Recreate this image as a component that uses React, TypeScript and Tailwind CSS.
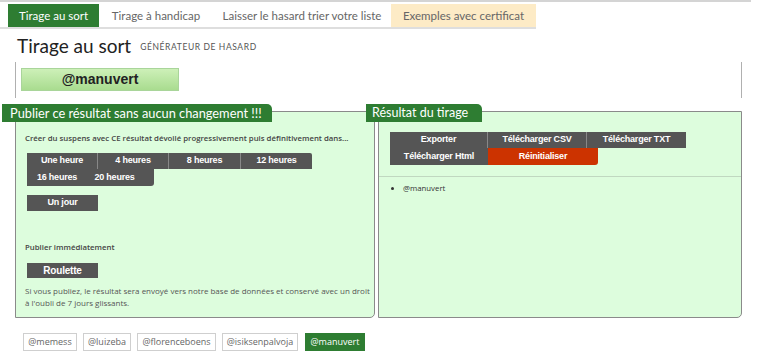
import React from "react";

const btn = "h-full flex items-center justify-center text-white text-[9px] font-bold tracking-[-0.2px] [font-family:'Liberation_Sans',Arial,sans-serif]";

export default function App() {
  return (
    <div className="w-[768px] h-[356px] bg-white overflow-hidden text-[#333] [font-family:Lato,'Open_Sans',sans-serif]">
      <div className="w-[751px] h-[2px] bg-[#d4d4d4]" />
      {/* tabs */}
      <div className="mt-[2px] w-[536px] flex border-b-[2px] border-[#dedede] pl-[8px] h-[25px]">
        <div className="w-[91px] bg-[#2e7d32] text-white text-[11.5px] flex items-center justify-center">Tirage au sort</div>
        <div className="w-[114px] text-[#666] text-[11.5px] flex items-center justify-center">Tirage à handicap</div>
        <div className="w-[178px] text-[#666] text-[11.5px] flex items-center justify-center">Laisser le hasard trier votre liste</div>
        <div className="w-[145px] bg-[#fdebc6] text-[#666] text-[11.5px] flex items-center justify-center">Exemples avec certificat</div>
      </div>
      {/* title */}
      <div className="flex items-end pl-[17px] mt-[5px] h-[24px]">
        <span className="text-[19px] leading-[24px] text-[#222]">Tirage au sort</span>
        <span className="ml-[9px] mb-[4px] text-[8.5px] uppercase text-[#555] tracking-[0.6px]">Générateur de hasard</span>
      </div>
      {/* result box */}
      <div className="ml-[15px] mt-[4px] w-[727px] h-[36px] border-x border-[#b0b0b0] pt-[6px] pl-[5px]">
        <div className="w-[158px] h-[23px] border border-[#a9d59a] bg-gradient-to-b from-[#cdf0b8] to-[#a9dc8f] flex items-center justify-center text-[14px] font-bold text-[#222] [font-family:'Liberation_Sans',Arial,sans-serif]">
          @manuvert
        </div>
      </div>
      {/* panels */}
      <div className="flex mt-[6px] h-[214px]">
        {/* left panel */}
        <div className="relative ml-[2px] w-[373px] pt-[7px]">
          <div className="absolute top-0 left-0 w-[270px] h-[18px] bg-[#2e7d32] rounded-tr-[5px] text-white text-[12.8px] leading-[18px] pl-[8px]">
            Publier ce résultat sans aucun changement !!!
          </div>
          <div className="ml-[13px] w-[360px] h-[207px] border border-[#8a8a8a] rounded-br-[5px] bg-[#ddfddd] pl-[9px] pt-[21px] [font-family:'Open_Sans',sans-serif]">
            <div className="text-[7.8px] font-semibold text-[#444] leading-[10px]">
              Créer du suspens avec CE résultat dévoilé progressivement puis définitivement dans...
            </div>
            <div className="mt-[10px] ml-[2px]">
              <div className="flex h-[16px]">
                <div className={`${btn} w-[71px] bg-[#555] border-r border-[#888]`}>Une heure</div>
                <div className={`${btn} w-[71px] bg-[#555] border-r border-[#888]`}>4 heures</div>
                <div className={`${btn} w-[72px] bg-[#555] border-r border-[#888]`}>8 heures</div>
                <div className={`${btn} w-[71px] bg-[#555] rounded-tr-[2px]`}>12 heures</div>
              </div>
              <div className="flex h-[17px] w-[127px] bg-[#555] rounded-br-[3px]">
                <div className={`${btn} w-[60px]`}>16 heures</div>
                <div className={`${btn} w-[55px]`}>20 heures</div>
              </div>
              <div className={`${btn} mt-[9px] w-[71px] !h-[16px] bg-[#555]`}>Un jour</div>
            </div>
            <div className="mt-[31px] text-[7.8px] font-semibold text-[#444] leading-[10px]">Publier immédiatement</div>
            <div className={`${btn} ml-[2px] mt-[11px] w-[71px] !h-[15px] bg-[#555] !text-[10px]`}>Roulette</div>
            <div className="mt-[7px] text-[8px] text-[#555] leading-[12px] pr-[4px]">
              Si vous publiez, le résultat sera envoyé vers notre base de données et conservé avec un droit à l'oubli de 7 jours glissants.
            </div>
          </div>
        </div>
        {/* right panel */}
        <div className="relative ml-[-9px] w-[376px] pt-[7px]">
          <div className="absolute top-0 left-0 w-[116px] h-[18px] bg-[#2e7d32] rounded-tr-[5px] text-white text-[12.5px] leading-[18px] pl-[6px]">
            Résultat du tirage
          </div>
          <div className="ml-[12px] w-[364px] h-[207px] border border-[#8a8a8a] rounded-br-[5px] bg-[#ddfddd]">
            <div className="pl-[11px] pt-[20px] h-[65px] border-b border-[#c0d8c0]">
              <div className="flex h-[16px]">
                <div className={`${btn} w-[98px] bg-[#555] border-r border-[#888]`}>Exporter</div>
                <div className={`${btn} w-[99px] bg-[#555] border-r border-[#888]`}>Télécharger CSV</div>
                <div className={`${btn} w-[99px] bg-[#555]`}>Télécharger TXT</div>
              </div>
              <div className="flex h-[17px]">
                <div className={`${btn} w-[98px] bg-[#555]`}>Télécharger Html</div>
                <div className={`${btn} w-[110px] bg-[#cc3300] rounded-br-[3px]`}>Réinitialiser</div>
              </div>
            </div>
            <ul className="mt-[6px] ml-[24px] list-disc text-[7.8px] text-[#333] [font-family:'Open_Sans',sans-serif]">
              <li>@manuvert</li>
            </ul>
          </div>
        </div>
      </div>
      {/* tags */}
      <div className="flex gap-[6px] ml-[23px] mt-[15px] [font-family:'Open_Sans',sans-serif]">
        <div className="h-[18px] w-[54px] border border-[#cfcfcf] text-[#666] text-[9px] flex items-center justify-center">@memess</div>
        <div className="h-[18px] w-[48px] border border-[#cfcfcf] text-[#666] text-[9px] flex items-center justify-center">@luizeba</div>
        <div className="h-[18px] w-[79px] border border-[#cfcfcf] text-[#666] text-[9px] flex items-center justify-center">@florenceboens</div>
        <div className="h-[18px] w-[76px] border border-[#cfcfcf] text-[#666] text-[9px] flex items-center justify-center">@isiksenpalvoja</div>
        <div className="h-[18px] w-[60px] ml-[1px] bg-[#2e7d32] text-white text-[9px] flex items-center justify-center">@manuvert</div>
      </div>
    </div>
  );
}
